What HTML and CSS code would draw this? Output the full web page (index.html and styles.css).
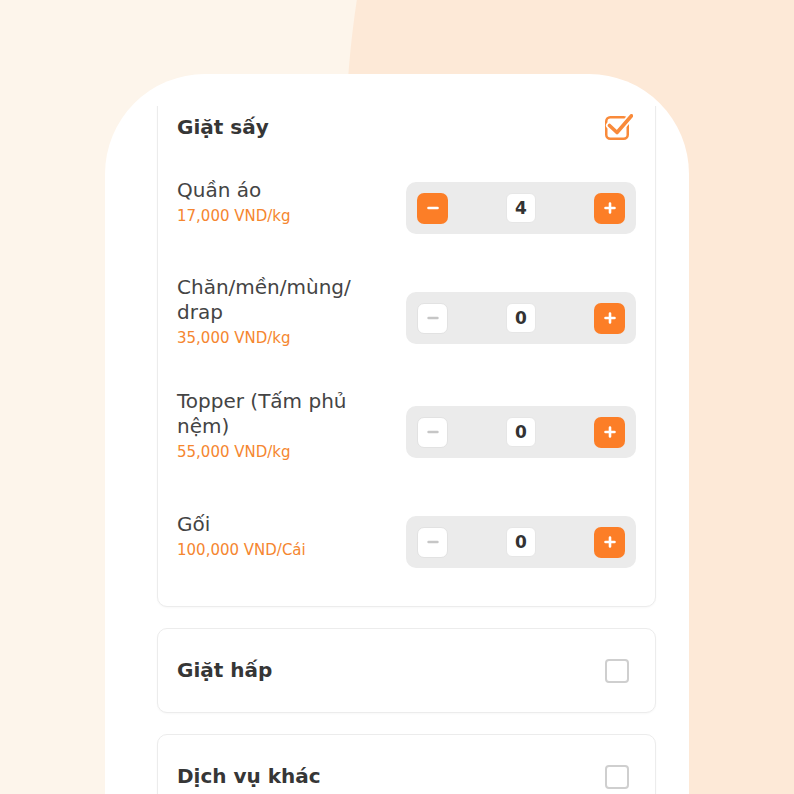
FILE: index.html
```html
<!DOCTYPE html>
<html lang="vi">
<head>
<meta charset="utf-8">
<title>Dịch vụ</title>
<link rel="stylesheet" href="styles.css">
</head>
<body>
<div class="phone">
  <div class="viewport">
    <div class="list">
      <section class="card card-open">
        <div class="card-head">
          <h2 class="card-title">Giặt sấy</h2>
          <svg class="check-on" width="28" height="26" viewBox="0 0 28 26" aria-hidden="true">
            <rect x="1.25" y="3.25" width="21.5" height="21.5" rx="4" fill="none" stroke="#f98a3a" stroke-width="2.5"/>
            <path d="M4.5 11.5 L12 18.5 L26.5 1.8" fill="none" stroke="#fff" stroke-width="7" stroke-linecap="round" stroke-linejoin="round"/>
            <path d="M4.5 11.5 L12 18.5 L26.5 1.8" fill="none" stroke="#f98a3a" stroke-width="3.6" stroke-linecap="round" stroke-linejoin="round"/>
          </svg>
        </div>
        <div class="rows">
          <div class="row">
            <div class="label">
              <div class="name">Quần áo</div>
              <div class="price">17,000 VND/kg</div>
            </div>
            <div class="stepper">
              <span class="btn"><svg width="12" height="12" viewBox="0 0 12 12"><path d="M1.5 6 H10.5" stroke="#fff" stroke-width="2.6" stroke-linecap="round"/></svg></span>
              <span class="count">4</span>
              <span class="btn"><svg width="12" height="12" viewBox="0 0 12 12"><path d="M1.5 6 H10.5 M6 1.5 V10.5" stroke="#fff" stroke-width="2.6" stroke-linecap="round"/></svg></span>
            </div>
          </div>
          <div class="row">
            <div class="label">
              <div class="name">Chăn/mền/mùng/<wbr>drap</div>
              <div class="price">35,000 VND/kg</div>
            </div>
            <div class="stepper">
              <span class="btn btn-off"><svg width="12" height="12" viewBox="0 0 12 12"><path d="M1.5 6 H10.5" stroke="#c6c6c6" stroke-width="2.4" stroke-linecap="round"/></svg></span>
              <span class="count">0</span>
              <span class="btn"><svg width="12" height="12" viewBox="0 0 12 12"><path d="M1.5 6 H10.5 M6 1.5 V10.5" stroke="#fff" stroke-width="2.6" stroke-linecap="round"/></svg></span>
            </div>
          </div>
          <div class="row">
            <div class="label">
              <div class="name">Topper (Tấm phủ nệm)</div>
              <div class="price">55,000 VND/kg</div>
            </div>
            <div class="stepper">
              <span class="btn btn-off"><svg width="12" height="12" viewBox="0 0 12 12"><path d="M1.5 6 H10.5" stroke="#c6c6c6" stroke-width="2.4" stroke-linecap="round"/></svg></span>
              <span class="count">0</span>
              <span class="btn"><svg width="12" height="12" viewBox="0 0 12 12"><path d="M1.5 6 H10.5 M6 1.5 V10.5" stroke="#fff" stroke-width="2.6" stroke-linecap="round"/></svg></span>
            </div>
          </div>
          <div class="row">
            <div class="label">
              <div class="name">Gối</div>
              <div class="price">100,000 VND/Cái</div>
            </div>
            <div class="stepper">
              <span class="btn btn-off"><svg width="12" height="12" viewBox="0 0 12 12"><path d="M1.5 6 H10.5" stroke="#c6c6c6" stroke-width="2.4" stroke-linecap="round"/></svg></span>
              <span class="count">0</span>
              <span class="btn"><svg width="12" height="12" viewBox="0 0 12 12"><path d="M1.5 6 H10.5 M6 1.5 V10.5" stroke="#fff" stroke-width="2.6" stroke-linecap="round"/></svg></span>
            </div>
          </div>
        </div>
      </section>

      <section class="card">
        <div class="card-head">
          <h2 class="card-title">Giặt hấp</h2>
          <span class="check-off"></span>
        </div>
      </section>

      <section class="card">
        <div class="card-head">
          <h2 class="card-title">Dịch vụ khác</h2>
          <span class="check-off"></span>
        </div>
      </section>
    </div>
  </div>
</div>
</body>
</html>
```

FILE: styles.css
```css
html, body {
  margin: 0;
  padding: 0;
}

body {
  width: 794px;
  height: 794px;
  overflow: hidden;
  font-family: "DejaVu Sans", "Noto Sans", sans-serif;
  background: radial-gradient(circle 1000px at 1345px 150px, #fde9d7 999px, #fdf5eb 1000px);
}

.phone {
  margin: 74px 0 0 105px;
  width: 584px;
  height: 720px;
  background: #ffffff;
  border-radius: 100px 100px 0 0;
  padding-top: 32px;
  box-sizing: border-box;
}

.viewport {
  height: 100%;
  overflow: hidden;
  padding: 0 33px 0 52px;
}

.list {
  margin-top: -21px;
  display: flex;
  flex-direction: column;
  gap: 21px;
}

.card {
  background: #ffffff;
  border: 1px solid #ececec;
  border-radius: 10px;
  padding: 20px 26px 20px 19px;
  box-shadow: 0 1px 2px rgba(0, 0, 0, 0.03);
}

.card-open {
  padding-bottom: 38px;
}

.card-head {
  display: flex;
  align-items: center;
  justify-content: space-between;
  min-height: 43px;
}

.card-title {
  margin: 0;
  font-size: 20px;
  font-weight: 700;
  color: #363636;
  line-height: 25px;
}

.check-on {
  display: block;
  margin-right: -4px;
  margin-top: -2px;
}

.check-off {
  display: block;
  width: 24px;
  height: 24px;
  box-sizing: border-box;
  border: 2px solid #cfcfcf;
  border-radius: 4px;
}

.rows {
  margin-top: 20px;
  display: flex;
  flex-direction: column;
  gap: 41px;
}

.row {
  display: flex;
  align-items: center;
  justify-content: space-between;
}

.label {
  width: 210px;
}

.name {
  font-size: 20px;
  line-height: 25px;
  color: #444444;
}

.price {
  font-size: 15px;
  line-height: 20px;
  padding-top: 3px;
  color: #f5862f;
}

.stepper {
  margin-top: 13px;
  margin-right: -7px;
  width: 230px;
  height: 52px;
  box-sizing: border-box;
  padding: 0 11px;
  background: #ebebeb;
  border-radius: 10px;
  display: flex;
  align-items: center;
  justify-content: space-between;
}

.btn {
  width: 31px;
  height: 31px;
  border-radius: 7px;
  background: #fc7e27;
  display: flex;
  align-items: center;
  justify-content: center;
  box-sizing: border-box;
}

.btn-off {
  background: #ffffff;
  border: 1px solid #e2e2e2;
}

.count {
  width: 30px;
  height: 30px;
  border-radius: 6px;
  background: #ffffff;
  border: 1px solid #e6e6e6;
  box-sizing: border-box;
  display: flex;
  align-items: center;
  justify-content: center;
  font-size: 17px;
  font-weight: 700;
  color: #333333;
}
```
